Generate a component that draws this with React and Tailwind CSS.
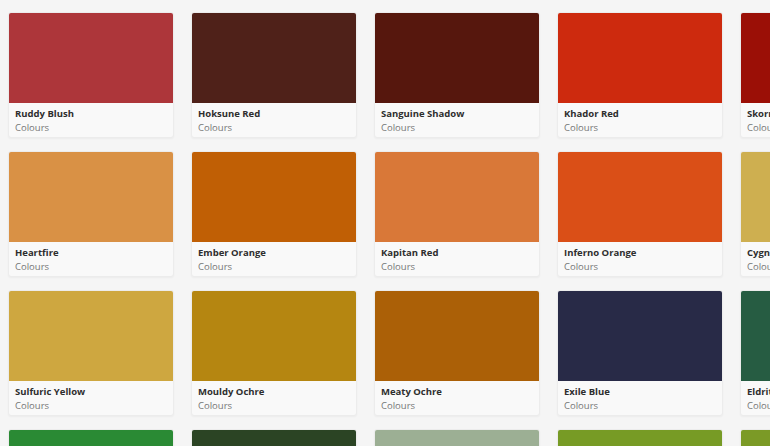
const rows = [
  [
    ["Ruddy Blush", "#ad363a"],
    ["Hoksune Red", "#4f2119"],
    ["Sanguine Shadow", "#56170d"],
    ["Khador Red", "#cd2a0e"],
    ["Skorne Red", "#9b0f06"],
  ],
  [
    ["Heartfire", "#d99145"],
    ["Ember Orange", "#c05f05"],
    ["Kapitan Red", "#d97838"],
    ["Inferno Orange", "#da4f17"],
    ["Cygnus Yellow", "#ceaf50"],
  ],
  [
    ["Sulfuric Yellow", "#cea740"],
    ["Mouldy Ochre", "#b58611"],
    ["Meaty Ochre", "#ab6007"],
    ["Exile Blue", "#282a47"],
    ["Eldritch Green", "#265c42"],
  ],
  [
    ["Pathfinder Green", "#2a8a34"],
    ["Moss Green", "#2b4424"],
    ["Sage Grey", "#9caf94"],
    ["Lime Green", "#779b25"],
    ["Olive Green", "#7b9a26"],
  ],
];

function Card({ name, color }) {
  return (
    <div className="w-[166px] h-[126px] shrink-0 rounded-[3px] bg-[#f9f9f9] border border-[#ececec] shadow-[0_1px_2px_rgba(0,0,0,0.04)] overflow-hidden flex flex-col">
      <div className="h-[90px] w-full" style={{ backgroundColor: color }} />
      <div className="px-[6px] pt-[4px] flex flex-col">
        <div className="text-[9.5px] leading-[14px] font-bold text-[#2e2e2e] whitespace-nowrap">{name}</div>
        <div className="text-[9.5px] leading-[14px] text-[#777777] whitespace-nowrap">Colours</div>
      </div>
    </div>
  );
}

export default function App() {
  return (
    <div
      className="w-[770px] h-[446px] overflow-hidden bg-[#f5f5f5]"
      style={{ fontFamily: '"Open Sans", "Liberation Sans", sans-serif' }}
    >
      <div className="pt-[12px] pl-[8px] flex flex-col gap-[13px]">
        {rows.map((row, i) => (
          <div key={i} className="flex gap-[17px]">
            {row.map(([n, c]) => (
              <Card key={n} name={n} color={c} />
            ))}
          </div>
        ))}
      </div>
    </div>
  );
}
